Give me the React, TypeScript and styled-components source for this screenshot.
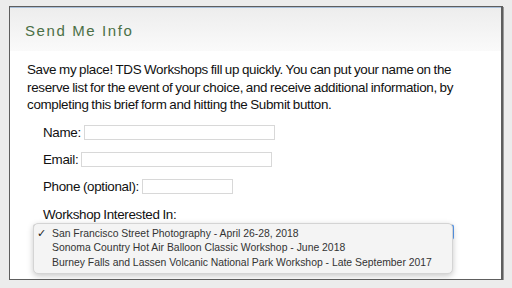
import styled, { createGlobalStyle } from 'styled-components';

const GlobalStyle = createGlobalStyle`
  html, body {
    margin: 0;
    padding: 0;
    background: #ececec;
  }
  body {
    padding: 6px 9px 0 9px;
    font-family: "Liberation Sans", Arial, sans-serif;
  }
`;

const Panel = styled.div`
  height: 272px;
  background: #ffffff;
  border: 1px solid #5e5e5e;
  border-right-width: 2px;
  box-shadow: 1px 1px 0 #9a9a9a;
  overflow: hidden;
`;

const Header = styled.div`
  height: 43px;
  border-top: 1px solid #a9bfd9;
  background: linear-gradient(#ededed, #fafafa);
  display: flex;
  align-items: center;
  padding-left: 15px;
`;

const Title = styled.h2`
  margin: 0;
  font-size: 15px;
  font-weight: 400;
  letter-spacing: 1.6px;
  color: #4b7046;
  padding-top: 2px;
`;

const Body = styled.div`
  padding: 10px 12px 0 17px;
  color: #111;
`;

const Intro = styled.p`
  margin: 0;
  width: 464px;
  font-size: 13.4px;
  letter-spacing: -0.32px;
  word-spacing: -0.6px;
  line-height: 17.5px;
`;

const Form = styled.form`
  display: flex;
  flex-direction: column;
  gap: 12px;
  margin-top: 11px;
  padding-left: 16px;
`;

const Row = styled.div`
  display: flex;
  align-items: center;
  height: 15px;
  font-size: 13.4px;
  letter-spacing: -0.32px;
  word-spacing: -0.6px;
`;

const Label = styled.label`
  margin-right: 3px;
  line-height: 15px;
`;

const TextInput = styled.div<{ $w: number }>`
  width: ${(p) => p.$w}px;
  height: 13px;
  border: 1px solid #d8d8d8;
  background: #fff;
`;

const Group = styled.div`
  display: flex;
  flex-direction: column;
`;

const GroupLabel = styled.div`
  font-size: 13.4px;
  letter-spacing: -0.32px;
  word-spacing: -0.6px;
  line-height: 17px;
`;

const SelectBox = styled.div`
  position: relative;
  margin-left: -10px;
  width: 418px;
  height: 14px;
  margin-top: 1px;
  border: 1px solid #d8d8d8;
  border-right: 2px solid #5a9bf0;
  border-radius: 3px;
`;

const Menu = styled.ul`
  position: absolute;
  top: -2px;
  left: -1px;
  width: 418px;
  margin: 0;
  padding: 3px 0 3px;
  list-style: none;
  background: #f4f4f4;
  border: 1px solid #d4d4d4;
  border-radius: 5px;
  box-shadow: 0 2px 6px rgba(0, 0, 0, 0.22);
`;

const Option = styled.li<{ $checked?: boolean }>`
  position: relative;
  padding-left: 18px;
  height: 14.5px;
  line-height: 14.5px;
  font-size: 10.4px;
  color: #333;
  white-space: nowrap;

  &::before {
    content: ${(p) => (p.$checked ? "'✓'" : "''")};
    position: absolute;
    left: 3px;
    font-family: "DejaVu Sans", sans-serif;
    font-size: 11px;
    color: #222;
  }
`;

const workshops = [
  'San Francisco Street Photography - April 26-28, 2018',
  'Sonoma Country Hot Air Balloon Classic Workshop - June 2018',
  'Burney Falls and Lassen Volcanic National Park Workshop - Late September 2017',
];

export default function App() {
  return (
    <>
      <GlobalStyle />
      <Panel>
        <Header>
          <Title>Send Me Info</Title>
        </Header>
        <Body>
          <Intro>
            Save my place! TDS Workshops fill up quickly. You can put your name on the reserve
            list for the event of your choice, and receive additional information, by completing
            this brief form and hitting the Submit button.
          </Intro>
          <Form>
            <Row>
              <Label>Name:</Label>
              <TextInput $w={189} />
            </Row>
            <Row>
              <Label>Email:</Label>
              <TextInput $w={189} />
            </Row>
            <Row>
              <Label>Phone (optional):</Label>
              <TextInput $w={89} />
            </Row>
            <Group>
              <GroupLabel>Workshop Interested In:</GroupLabel>
              <SelectBox>
                <Menu>
                  {workshops.map((w, i) => (
                    <Option key={w} $checked={i === 0}>
                      {w}
                    </Option>
                  ))}
                </Menu>
              </SelectBox>
            </Group>
          </Form>
        </Body>
      </Panel>
    </>
  );
}
